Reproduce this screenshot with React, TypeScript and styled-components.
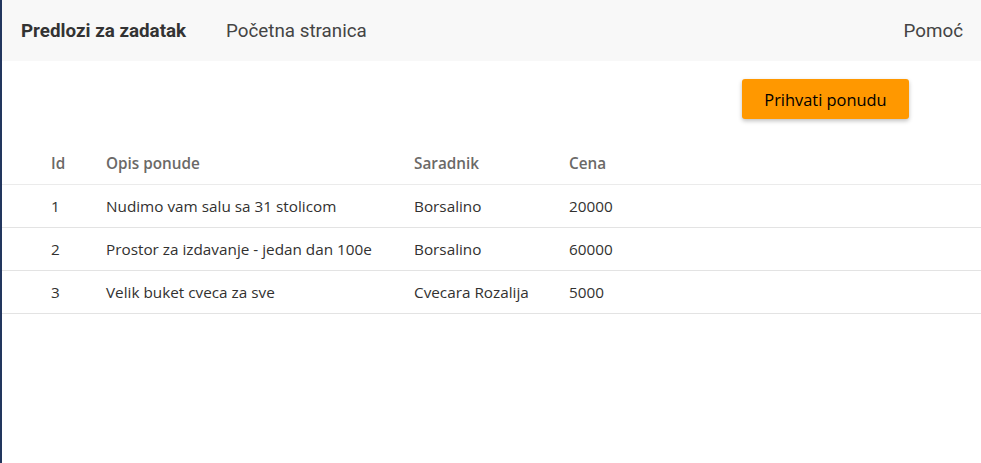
import styled, { createGlobalStyle } from "styled-components";

const GlobalStyle = createGlobalStyle`
  html, body {
    margin: 0;
    padding: 0;
    background: #ffffff;
  }
  body {
    font-family: "Open Sans", "Noto Sans", sans-serif;
  }
`;

const Page = styled.div`
  min-height: 463px;
  border-left: 2px solid #22365e;
  box-sizing: border-box;
  background: #ffffff;
`;

const NavBar = styled.nav`
  height: 61px;
  background: #f8f8f8;
  display: flex;
  align-items: center;
  padding: 0 18px 0 19px;
  font-family: Roboto, "Liberation Sans", sans-serif;
  font-size: 18.8px;
  color: #3a3a3a;
`;

const Brand = styled.span`
  font-weight: 700;
  color: #333333;
  margin-right: 40px;
`;

const NavLink = styled.a<{ $right?: boolean }>`
  color: #444444;
  text-decoration: none;
  margin-left: ${(p) => (p.$right ? "auto" : "0")};
`;

const Actions = styled.div`
  display: flex;
  justify-content: flex-end;
  padding: 18px 72px 0 0;
`;

const AcceptButton = styled.button`
  width: 167px;
  height: 40px;
  border: none;
  border-radius: 3px;
  background: #ff9800;
  color: #000000;
  font-family: "Open Sans", "Noto Sans", sans-serif;
  font-size: 16.4px;
  font-weight: 500;
  box-shadow: 0 2px 4px rgba(0, 0, 0, 0.25);
  cursor: pointer;
`;

const Table = styled.div`
  margin-top: 23px;
  font-size: 15.3px;
`;

const Row = styled.div<{ $header?: boolean }>`
  display: grid;
  grid-template-columns: 55px 308px 155px 1fr;
  align-items: center;
  height: 42px;
  padding-left: 49px;
  border-bottom: 1px solid ${(p) => (p.$header ? "#ebebeb" : "#e3e3e3")};
  color: ${(p) => (p.$header ? "#6b6967" : "#323130")};
  font-weight: ${(p) => (p.$header ? 600 : 400)};
`;

const Cell = styled.span`
  white-space: nowrap;
`;

type Offer = {
  id: number;
  opis: string;
  saradnik: string;
  cena: number;
};

const offers: Offer[] = [
  { id: 1, opis: "Nudimo vam salu sa 31 stolicom", saradnik: "Borsalino", cena: 20000 },
  { id: 2, opis: "Prostor za izdavanje - jedan dan 100e", saradnik: "Borsalino", cena: 60000 },
  { id: 3, opis: "Velik buket cveca za sve", saradnik: "Cvecara Rozalija", cena: 5000 },
];

const App = () => {
  return (
    <>
      <GlobalStyle />
      <Page>
        <NavBar>
          <Brand>Predlozi za zadatak</Brand>
          <NavLink href="#">Početna stranica</NavLink>
          <NavLink href="#" $right>
            Pomoć
          </NavLink>
        </NavBar>
        <Actions>
          <AcceptButton>Prihvati ponudu</AcceptButton>
        </Actions>
        <Table>
          <Row $header>
            <Cell>Id</Cell>
            <Cell>Opis ponude</Cell>
            <Cell>Saradnik</Cell>
            <Cell>Cena</Cell>
          </Row>
          {offers.map((o) => (
            <Row key={o.id}>
              <Cell>{o.id}</Cell>
              <Cell>{o.opis}</Cell>
              <Cell>{o.saradnik}</Cell>
              <Cell>{o.cena}</Cell>
            </Row>
          ))}
        </Table>
      </Page>
    </>
  );
};

export default App;
